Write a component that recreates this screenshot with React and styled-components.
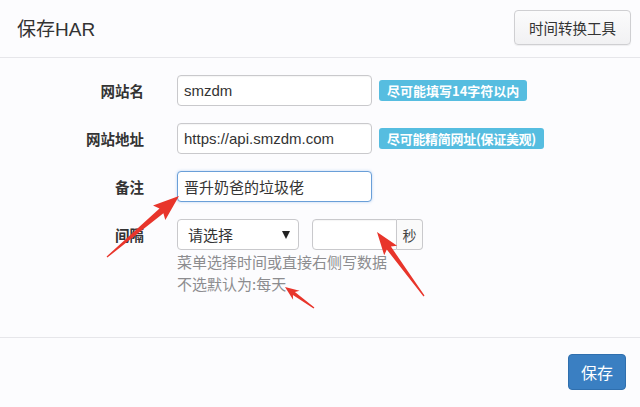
import React from "react";
import styled, { createGlobalStyle } from "styled-components";

const Global = createGlobalStyle`
  html, body { margin: 0; padding: 0; background: #fcfcfe; }
  body { font-family: "Liberation Sans", "Noto Sans CJK SC", sans-serif; color: #333; }
  * { box-sizing: border-box; }
`;

const Page = styled.div`
  position: relative;
  width: 640px;
  height: 407px;
  display: flex;
  flex-direction: column;
  background: #fcfcfe;
  overflow: hidden;
`;

const Header = styled.div`
  height: 58px;
  flex: none;
  display: flex;
  align-items: center;
  justify-content: space-between;
  padding: 0 9px 2px 17px;
  border-bottom: 1px solid #e6e6ea;
`;

const Title = styled.h4`
  margin: 0;
  font-size: 19px;
  font-weight: normal;
  color: #333;
`;

const ToolButton = styled.button`
  width: 117px;
  height: 35px;
  border: 1px solid #cfcfd2;
  border-radius: 4px;
  background: linear-gradient(#fbfbfc, #f1f1f3);
  box-shadow: 0 1px 1px rgba(0, 0, 0, 0.06);
  font-family: "Noto Sans CJK SC", sans-serif;
  font-size: 14.5px;
  color: #333;
  padding: 0;
`;

const Body = styled.div`
  flex: 1;
  padding: 17px 0 0 0;
  display: flex;
  flex-direction: column;
  gap: 17px;
`;

const Row = styled.div`
  display: grid;
  grid-template-columns: 144px auto;
  column-gap: 33px;
  align-items: start;
`;

const Label = styled.label`
  height: 31px;
  display: flex;
  align-items: center;
  justify-content: flex-end;
  font-family: "Noto Sans CJK SC", sans-serif;
  font-weight: bold;
  font-size: 14.5px;
  color: #333;
`;

const Field = styled.div`
  display: flex;
  align-items: center;
  gap: 7px;
`;

const Input = styled.div`
  width: ${(p) => p.$w || 195}px;
  height: 31px;
  display: flex;
  align-items: center;
  padding-left: 6px;
  background: #fff;
  border: 1px solid ${(p) => (p.$focus ? "#6a9fd8" : "#c9c9cc")};
  box-shadow: ${(p) => (p.$focus ? "0 0 3px rgba(102,160,230,0.45)" : "inset 0 1px 1px rgba(0,0,0,0.04)")};
  border-radius: ${(p) => p.$radius || "4px"};
  font-family: "Liberation Sans", "Noto Sans CJK SC", sans-serif;
  font-size: 15px;
  color: #333;
`;

const Badge = styled.span`
  height: 21px;
  display: inline-flex;
  align-items: center;
  padding: 0 8px;
  border-radius: 3px;
  background: #56bde0;
  color: #fff;
  font-family: "Noto Sans CJK SC", sans-serif;
  font-weight: bold;
  font-size: 13px;
  white-space: nowrap;
  letter-spacing: ${(p) => p.$ls || 0}px;
`;

const Column = styled.div`
  display: flex;
  flex-direction: column;
`;

const Controls = styled.div`
  display: flex;
  align-items: center;
`;

const Select = styled.div`
  width: 122px;
  height: 31px;
  display: flex;
  align-items: center;
  justify-content: space-between;
  padding: 0 8px 0 10px;
  background: #fff;
  border: 1px solid #c9c9cc;
  border-radius: 4px;
  font-family: "Noto Sans CJK SC", sans-serif;
  font-size: 15px;
  color: #333;
  margin-right: 13px;
`;

const Caret = styled.span`
  width: 0;
  height: 0;
  border-left: 4px solid transparent;
  border-right: 4px solid transparent;
  border-top: 8px solid #222;
`;

const Addon = styled.div`
  width: 26px;
  height: 31px;
  display: flex;
  align-items: center;
  justify-content: center;
  border: 1px solid #c9c9cc;
  border-left: none;
  border-radius: 0 4px 4px 0;
  background: #fafafa;
  font-family: "Noto Sans CJK SC", sans-serif;
  font-size: 14px;
  color: #444;
`;

const Help = styled.div`
  margin-top: 1px;
  font-family: "Noto Sans CJK SC", sans-serif;
  font-size: 15px;
  line-height: 21.5px;
  color: #8c8c8f;
`;

const Footer = styled.div`
  height: 70px;
  flex: none;
  border-top: 1px solid #e6e6ea;
  display: flex;
  justify-content: flex-end;
  align-items: flex-start;
  padding: 16px 14px 0 0;
`;

const SaveButton = styled.button`
  width: 58px;
  height: 36px;
  border: 1px solid #2f6fae;
  border-radius: 4px;
  background: #3a7fc2;
  color: #fff;
  font-family: "Noto Sans CJK SC", sans-serif;
  font-size: 16px;
  padding: 0;
`;

const Overlay = styled.svg`
  position: absolute;
  left: 0;
  top: 0;
  pointer-events: none;
`;

function arrowPoints(x1, y1, x2, y2, headLen, headW, shaftW) {
  const dx = x2 - x1;
  const dy = y2 - y1;
  const len = Math.hypot(dx, dy);
  const ux = dx / len;
  const uy = dy / len;
  const nx = -uy;
  const ny = ux;
  const bx = x2 - ux * headLen;
  const by = y2 - uy * headLen;
  const p = (x, y) => `${x.toFixed(1)},${y.toFixed(1)}`;
  return [
    p(x1 + nx * 0.6, y1 + ny * 0.6),
    p(bx + nx * shaftW / 2 + ux * 3, by + ny * shaftW / 2 + uy * 3),
    p(bx + nx * headW / 2, by + ny * headW / 2),
    p(x2, y2),
    p(bx - nx * headW / 2, by - ny * headW / 2),
    p(bx - nx * shaftW / 2 + ux * 3, by - ny * shaftW / 2 + uy * 3),
    p(x1 - nx * 0.6, y1 - ny * 0.6),
  ].join(" ");
}

const arrows = [
  [107, 257, 179, 196, 26, 19, 6],
  [424, 296, 377, 232, 23, 16, 5],
  [314, 308, 285, 287, 14, 11, 3.5],
];

export default function App() {
  return (
    <>
      <Global />
      <Page>
        <Header>
          <Title>保存HAR</Title>
          <ToolButton>时间转换工具</ToolButton>
        </Header>
        <Body>
          <Row>
            <Label>网站名</Label>
            <Field>
              <Input>smzdm</Input>
              <Badge>尽可能填写14字符以内</Badge>
            </Field>
          </Row>
          <Row>
            <Label>网站地址</Label>
            <Field>
              <Input>https://api.smzdm.com</Input>
              <Badge $ls={-0.3}>尽可能精简网址(保证美观)</Badge>
            </Field>
          </Row>
          <Row>
            <Label>备注</Label>
            <Field>
              <Input $focus>晋升奶爸的垃圾佬</Input>
            </Field>
          </Row>
          <Row>
            <Label>间隔</Label>
            <Column>
              <Controls>
                <Select>
                  请选择
                  <Caret />
                </Select>
                <Input $w={85} $radius="4px 0 0 4px" />
                <Addon>秒</Addon>
              </Controls>
              <Help>
                菜单选择时间或直接右侧写数据
                <br />
                不选默认为:每天
              </Help>
            </Column>
          </Row>
        </Body>
        <Footer>
          <SaveButton>保存</SaveButton>
        </Footer>
        <Overlay width="640" height="407" viewBox="0 0 640 407">
          {arrows.map((a, i) => (
            <polygon key={i} points={arrowPoints(...a)} fill="#e8352b" />
          ))}
        </Overlay>
      </Page>
    </>
  );
}
